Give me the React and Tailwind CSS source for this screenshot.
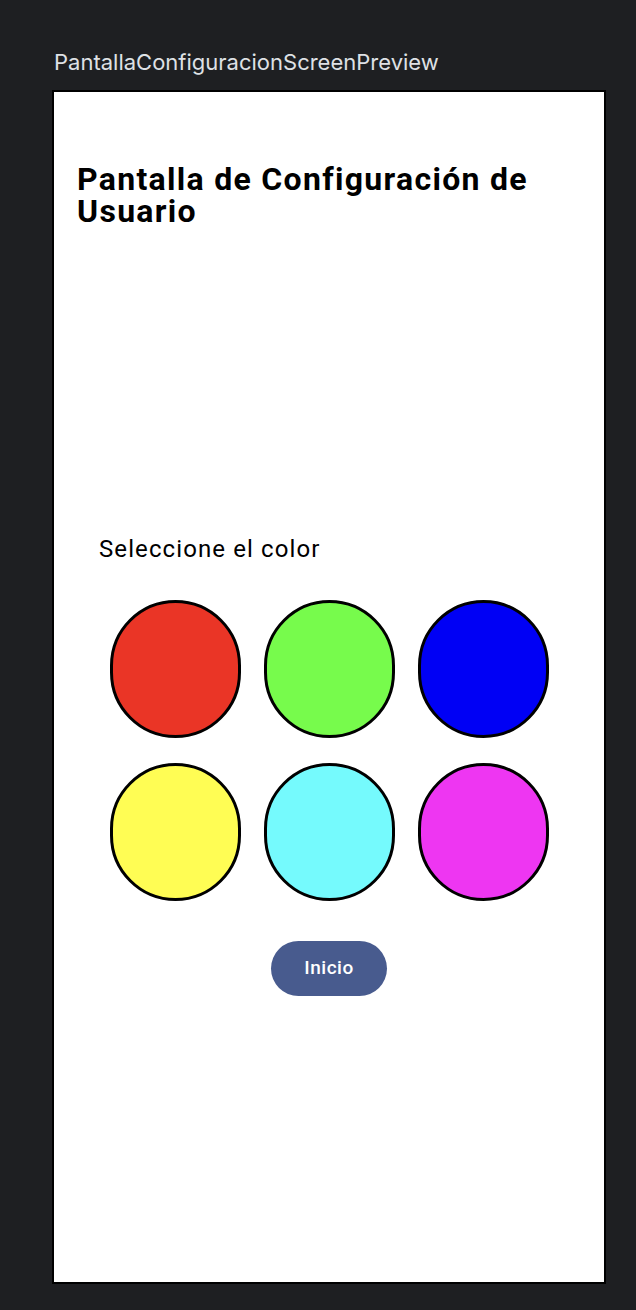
export default function App() {
  const colors = ["#ea3526", "#77fb4c", "#0000f5", "#fffd54", "#75fafd", "#ee36f2"];
  return (
    <div className="w-[636px] h-[1310px] bg-[#1e1f22] pt-[47px] pl-[52px]">
      <div className="text-[22px] leading-[30px] text-[#dfe1e5] pl-[2px] h-[43px]" style={{ fontFamily: "Inter, 'Noto Sans', sans-serif" }}>
        PantallaConfiguracionScreenPreview
      </div>
      <div className="w-[554px] h-[1194px] border-2 border-black bg-white flex flex-col" style={{ fontFamily: "Roboto, 'Noto Sans', sans-serif" }}>
        <h1 className="mt-[71px] ml-[23px] mr-[20px] text-[32px] leading-[32px] font-bold text-black tracking-[1.3px]">
          Pantalla de Configuración de Usuario
        </h1>
        <div className="mt-[309px] ml-[45px] text-[24px] leading-[26px] text-black tracking-[1.1px]">
          Seleccione el color
        </div>
        <div className="mt-[38px] self-center grid grid-cols-3 gap-x-[23px] gap-y-[25px]">
          {colors.map((c) => (
            <div key={c} className="w-[131px] h-[138px] rounded-full border-[3px] border-black" style={{ backgroundColor: c }} />
          ))}
        </div>
        <button className="mt-[40px] self-center w-[116px] h-[55px] rounded-full bg-[#485b8e] text-white text-[19px] font-medium tracking-[0.5px]">
          Inicio
        </button>
      </div>
    </div>
  );
}
